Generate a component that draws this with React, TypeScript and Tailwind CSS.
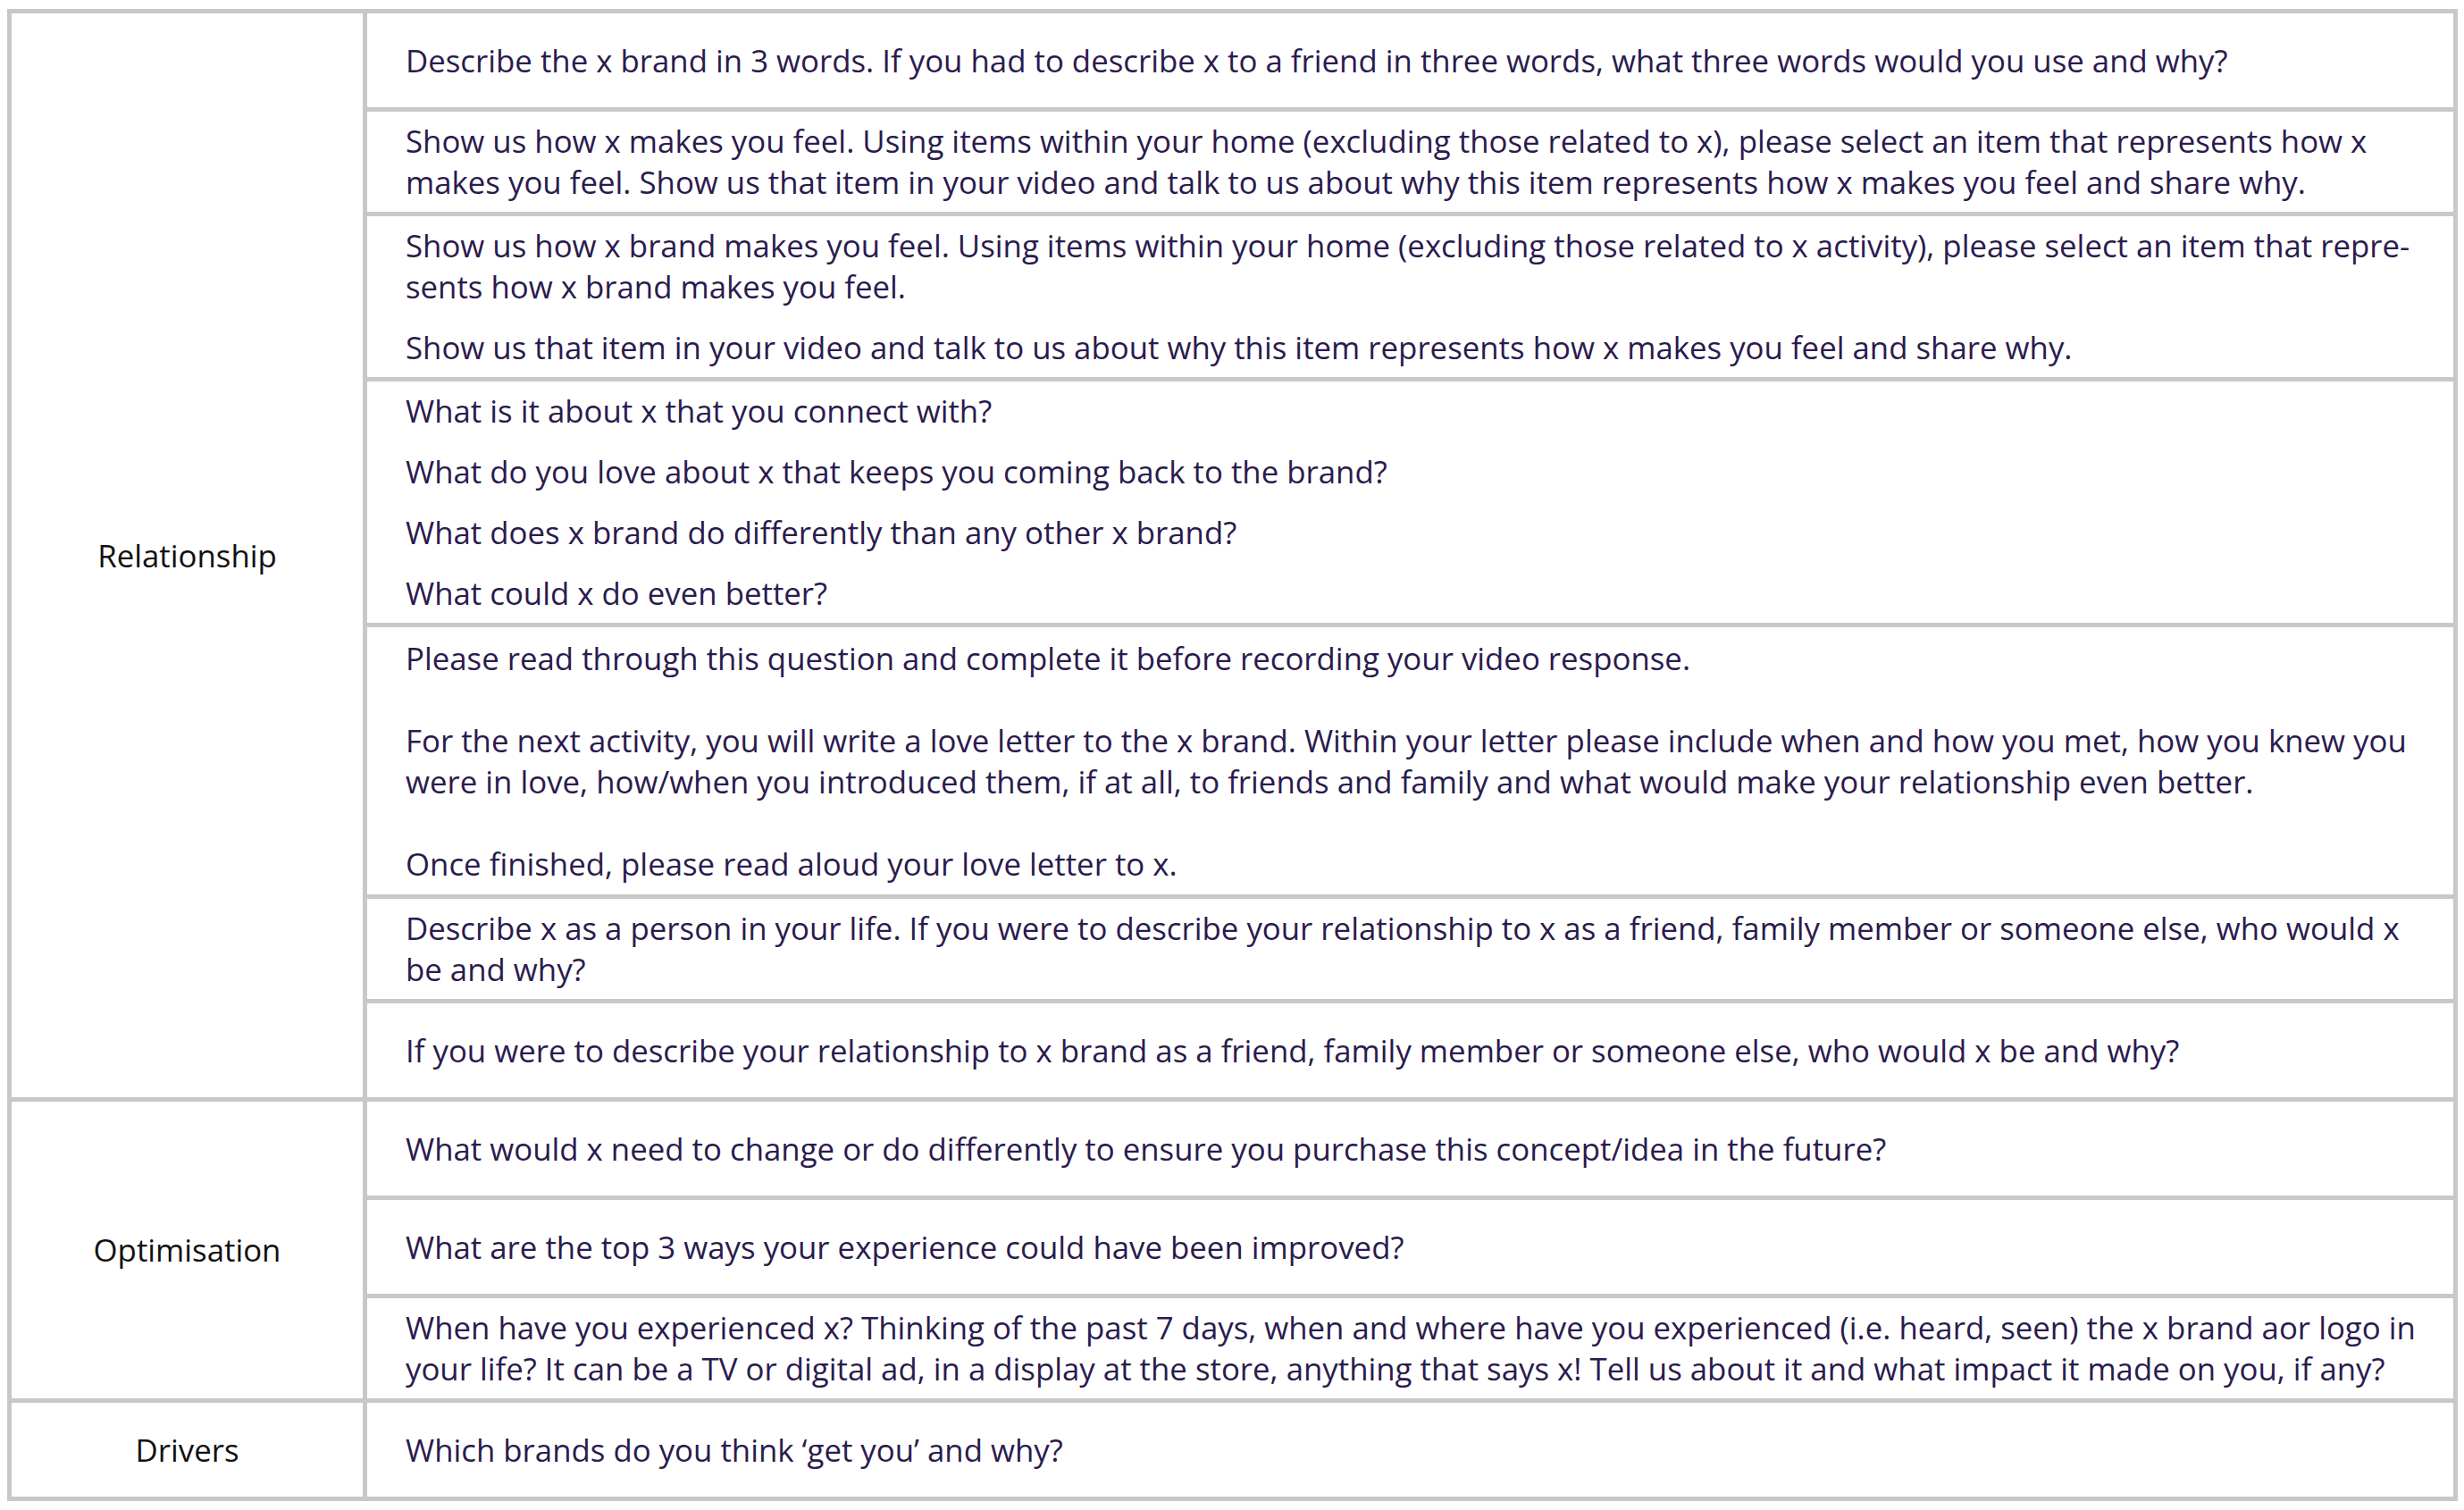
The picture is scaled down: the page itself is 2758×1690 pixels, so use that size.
import type { ReactNode } from "react";

const Cell = ({ children, pad = "py-[10px]" }: { children: ReactNode; pad?: string }) => (
  <div
    className={`min-h-[105px] bg-white flex flex-col justify-center gap-[22px] pl-[43px] pr-[32px] text-[#2b1b4e] ${pad}`}
  >
    {children}
  </div>
);

const Section = ({ label, children }: { label: string; children: ReactNode }) => (
  <div className="flex gap-[5px]">
    <div className="w-[393px] shrink-0 bg-white flex items-center justify-center text-[#111111]">
      {label}
    </div>
    <div className="flex-1 flex flex-col gap-[5px]">{children}</div>
  </div>
);

const App = (): JSX.Element => {
  return (
    <div
      className="min-h-screen bg-white text-[34.8px] leading-[46px]"
      style={{ fontFamily: '"Open Sans", "Noto Sans", sans-serif' }}
    >
      <div className="pl-[8px] pt-[10px]">
        <div className="w-[2743px] bg-[#c8c8c8] p-[5px] flex flex-col gap-[5px]">
          <Section label="Relationship">
            <Cell>
              <p>
                Describe the x brand in 3 words. If you had to describe x to a friend in three words, what three
                words would you use and why?
              </p>
            </Cell>
            <Cell>
              <p>
                Show us how x makes you feel. Using items within your home (excluding those related to x), please
                select an item that represents how x makes you feel. Show us that item in your video and talk to us
                about why this item represents how x makes you feel and share why.
              </p>
            </Cell>
            <Cell>
              <p>
                Show us how x brand makes you feel. Using items within your home (excluding those related to x
                activity), please select an item that repre-
                <br />
                sents how x brand makes you feel.
              </p>
              <p>Show us that item in your video and talk to us about why this item represents how x makes you feel and share why.</p>
            </Cell>
            <Cell>
              <p>What is it about x that you connect with?</p>
              <p>What do you love about x that keeps you coming back to the brand?</p>
              <p>What does x brand do differently than any other x brand?</p>
              <p>What could x do even better?</p>
            </Cell>
            <Cell pad="py-[11.5px]">
              <p>
                Please read through this question and complete it before recording your video response.
                <br />
                <br />
                For the next activity, you will write a love letter to the x brand. Within your letter please include
                when and how you met, how you knew you were in love, how/when you introduced them, if at all, to
                friends and family and what would make your relationship even better.
                <br />
                <br />
                Once finished, please read aloud your love letter to x.
              </p>
            </Cell>
            <Cell>
              <p>
                Describe x as a person in your life. If you were to describe your relationship to x as a friend,
                family member or someone else, who would x be and why?
              </p>
            </Cell>
            <Cell>
              <p>
                If you were to describe your relationship to x brand as a friend, family member or someone else, who
                would x be and why?
              </p>
            </Cell>
          </Section>

          <Section label="Optimisation">
            <Cell>
              <p>
                What would x need to change or do differently to ensure you purchase this concept/idea in the future?
              </p>
            </Cell>
            <Cell>
              <p>What are the top 3 ways your experience could have been improved?</p>
            </Cell>
            <Cell>
              <p>
                When have you experienced x? Thinking of the past 7 days, when and where have you experienced (i.e.
                heard, seen) the x brand aor logo in your life? It can be a TV or digital ad, in a display at the
                store, anything that says x! Tell us about it and what impact it made on you, if any?
              </p>
            </Cell>
          </Section>

          <Section label="Drivers">
            <Cell>
              <p>Which brands do you think ‘get you’ and why?</p>
            </Cell>
          </Section>
        </div>
        <div className="h-[12px]" />
      </div>
    </div>
  );
};

export default App;
